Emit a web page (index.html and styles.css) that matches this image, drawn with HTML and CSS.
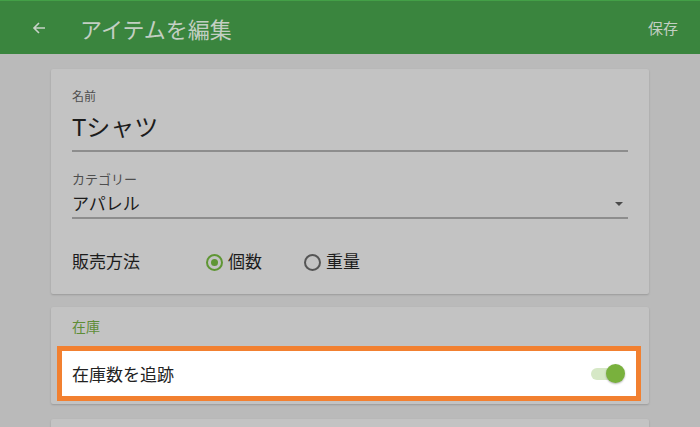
FILE: index.html
```html
<!DOCTYPE html>
<html lang="ja">
  <head>
    <meta charset="UTF-8" />
    <meta name="viewport" content="width=device-width, initial-scale=1.0" />
    <title>アイテムを編集</title>
    <link rel="stylesheet" href="styles.css">
  </head>
  <body>
    <!-- App Bar -->
    <header class="appbar">
      <svg class="back" width="16" height="16" viewBox="0 0 16 16">
        <path d="M14 8H3M8 3L3 8l5 5" fill="none" stroke="currentColor" stroke-width="1.6" />
      </svg>
      <div class="title">アイテムを編集</div>
      <div class="save">保存</div>
    </header>

    <main class="content">
      <!-- Item Details -->
      <section class="card details">
        <div class="field">
          <label>名前</label>
          <div class="value big">Tシャツ</div>
        </div>

        <div class="field select">
          <label>カテゴリー</label>
          <div class="value">アパレル</div>
          <span class="caret"></span>
        </div>

        <div class="sale-row">
          <span class="sale-label">販売方法</span>
          <span class="radio checked"></span>
          <span class="radio-text">個数</span>
          <span class="radio"></span>
          <span class="radio-text">重量</span>
        </div>
      </section>

      <!-- Stock -->
      <section class="card stock">
        <div class="section-title">在庫</div>
        <div class="track-row">
          <span>在庫数を追跡</span>
          <span class="switch"><span class="thumb"></span></span>
        </div>
      </section>

      <section class="card next"></section>
    </main>
  </body>
</html>
```

FILE: styles.css
```css
body {
  margin: 0;
  font-family: Roboto, "Noto Sans CJK JP", sans-serif;
  background-color: #bababa;
  color: #1c1c1c;
  overflow: hidden;
}

.appbar {
  height: 53px;
  background-color: #3a853e;
  border-top: 1px solid #43a047;
  color: #c3cfc3;
  display: flex;
  align-items: center;
  padding: 0 22px 0 31px;
}

.appbar .back {
  color: #c8d2c8;
}

.appbar .title {
  font-size: 22px;
  margin-left: 33px;
  flex: 1;
}

.appbar .save {
  font-size: 15px;
}

.content {
  padding: 15px 51px 0;
}

.card {
  background-color: #c3c3c3;
  box-shadow: 0 1px 2px rgba(0, 0, 0, 0.18);
  border-radius: 2px;
}

.details {
  padding: 20px 21px 20px;
  margin-bottom: 13px;
}

.field {
  position: relative;
  border-bottom: 2px solid #8d8d8d;
}

.field label {
  display: block;
  font-size: 12px;
  line-height: 16px;
  color: #4e4e4e;
}

.field .value {
  font-size: 17px;
  line-height: 22px;
  padding-bottom: 2px;
}

.field .value.big {
  font-size: 24px;
  line-height: 32px;
  margin-top: 7px;
  padding-bottom: 6px;
}

.field.select {
  margin-top: 20px;
}

.field.select label {
  font-size: 13px;
  margin-bottom: 5px;
}

.caret {
  position: absolute;
  right: 5px;
  bottom: 11px;
  border-left: 4px solid transparent;
  border-right: 4px solid transparent;
  border-top: 4px solid #4a4a4a;
}

.sale-row {
  display: flex;
  align-items: center;
  margin-top: 31px;
  font-size: 17px;
  line-height: 24px;
}

.sale-label {
  width: 134px;
}

.radio {
  width: 13px;
  height: 13px;
  border: 2px solid #555;
  border-radius: 50%;
  margin-right: 5px;
  display: flex;
  align-items: center;
  justify-content: center;
}

.radio.checked {
  border-color: #5f9634;
}

.radio.checked::after {
  content: "";
  width: 7px;
  height: 7px;
  border-radius: 50%;
  background-color: #5f9634;
}

.radio-text {
  margin-right: 42px;
}

.stock {
  padding: 10px 0 3px;
  margin-bottom: 15px;
}

.section-title {
  font-size: 14px;
  line-height: 20px;
  color: #5e8d36;
  padding-left: 21px;
  margin-bottom: 9px;
}

.track-row {
  margin: 0 8px 0 6px;
  height: 45px;
  border: 5px solid #f28030;
  background-color: #fff;
  display: flex;
  align-items: center;
  justify-content: space-between;
  padding: 0 15px 0 10px;
  font-size: 17px;
  color: #222;
}

.switch {
  position: relative;
  width: 30px;
  height: 12px;
  border-radius: 6px;
  background-color: #d6e8c6;
}

.switch .thumb {
  position: absolute;
  right: -4px;
  top: -4px;
  width: 19px;
  height: 19px;
  border-radius: 50%;
  background-color: #79b13d;
  box-shadow: 0 1px 2px rgba(0, 0, 0, 0.3);
}

.next {
  height: 40px;
}
```
